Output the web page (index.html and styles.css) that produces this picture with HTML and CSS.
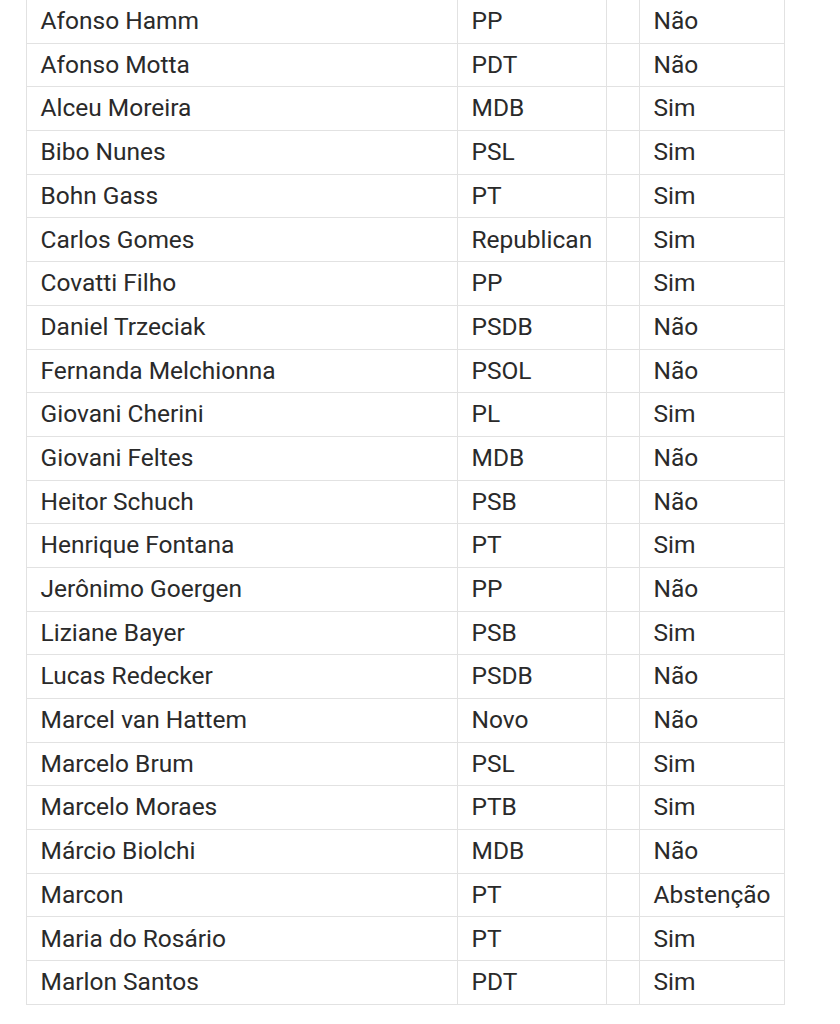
FILE: index.html
```html
<!DOCTYPE html>
<html lang="pt">
<head>
<meta charset="utf-8">
<title>Votação</title>
<link rel="stylesheet" href="styles.css">
</head>
<body>
<table class="votes">
<colgroup>
<col class="c-name"><col class="c-party"><col class="c-gap"><col class="c-vote">
</colgroup>
<tbody>
<tr><td>Afonso Hamm</td><td>PP</td><td></td><td>Não</td></tr>
<tr><td>Afonso Motta</td><td>PDT</td><td></td><td>Não</td></tr>
<tr><td>Alceu Moreira</td><td>MDB</td><td></td><td>Sim</td></tr>
<tr><td>Bibo Nunes</td><td>PSL</td><td></td><td>Sim</td></tr>
<tr><td>Bohn Gass</td><td>PT</td><td></td><td>Sim</td></tr>
<tr><td>Carlos Gomes</td><td>Republican</td><td></td><td>Sim</td></tr>
<tr><td>Covatti Filho</td><td>PP</td><td></td><td>Sim</td></tr>
<tr><td>Daniel Trzeciak</td><td>PSDB</td><td></td><td>Não</td></tr>
<tr><td>Fernanda Melchionna</td><td>PSOL</td><td></td><td>Não</td></tr>
<tr><td>Giovani Cherini</td><td>PL</td><td></td><td>Sim</td></tr>
<tr><td>Giovani Feltes</td><td>MDB</td><td></td><td>Não</td></tr>
<tr><td>Heitor Schuch</td><td>PSB</td><td></td><td>Não</td></tr>
<tr><td>Henrique Fontana</td><td>PT</td><td></td><td>Sim</td></tr>
<tr><td>Jerônimo Goergen</td><td>PP</td><td></td><td>Não</td></tr>
<tr><td>Liziane Bayer</td><td>PSB</td><td></td><td>Sim</td></tr>
<tr><td>Lucas Redecker</td><td>PSDB</td><td></td><td>Não</td></tr>
<tr><td>Marcel van Hattem</td><td>Novo</td><td></td><td>Não</td></tr>
<tr><td>Marcelo Brum</td><td>PSL</td><td></td><td>Sim</td></tr>
<tr><td>Marcelo Moraes</td><td>PTB</td><td></td><td>Sim</td></tr>
<tr><td>Márcio Biolchi</td><td>MDB</td><td></td><td>Não</td></tr>
<tr><td>Marcon</td><td>PT</td><td></td><td>Abstenção</td></tr>
<tr><td>Maria do Rosário</td><td>PT</td><td></td><td>Sim</td></tr>
<tr><td>Marlon Santos</td><td>PDT</td><td></td><td>Sim</td></tr>
</tbody>
</table>
</body>
</html>
```
FILE: styles.css
```css
html, body {
  margin: 0;
  padding: 0;
  background: #ffffff;
}
body {
  font-family: Roboto, "Noto Sans", sans-serif;
  color: #2a2a2a;
}
.votes {
  margin: -1px 0 0 26px;
  width: 758px;
  border-collapse: collapse;
  table-layout: fixed;
  font-size: 24.5px;
}
.c-name { width: 431px; }
.c-party { width: 149px; }
.c-gap { width: 33px; }
.c-vote { width: 145px; }
.votes td {
  height: 43.7px;
  box-sizing: border-box;
  padding: 0 0 0 13.5px;
  border: 1.5px solid #e2e2e2;
  vertical-align: middle;
  white-space: nowrap;
  overflow: hidden;
  line-height: 1;
}
```
